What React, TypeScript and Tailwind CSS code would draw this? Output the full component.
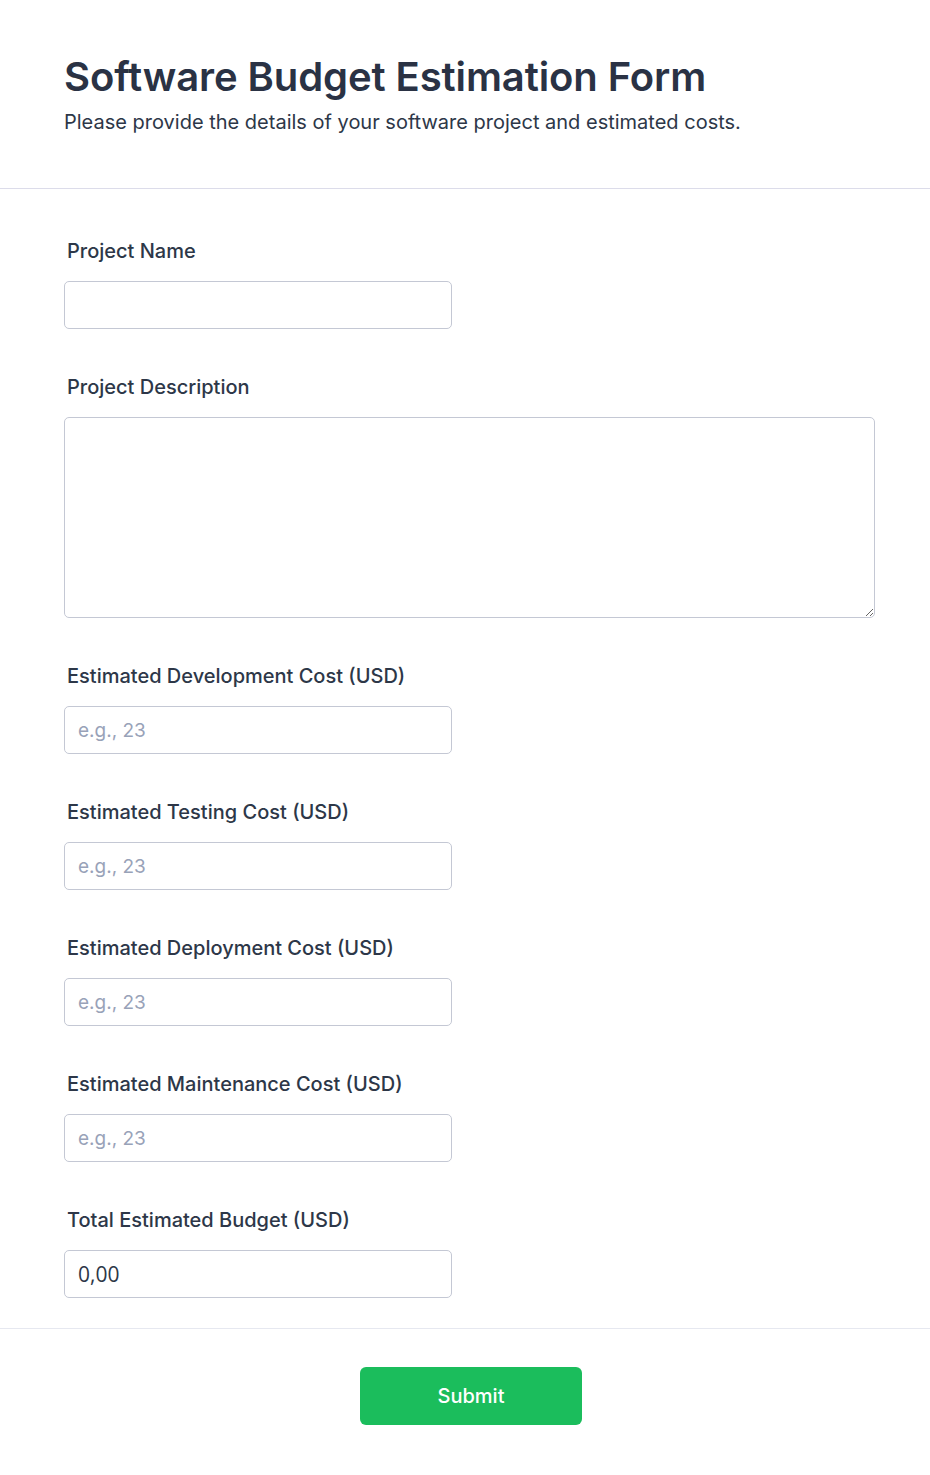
import { useState } from "react";

const costFields = [
  "Estimated Development Cost (USD)",
  "Estimated Testing Cost (USD)",
  "Estimated Deployment Cost (USD)",
  "Estimated Maintenance Cost (USD)",
];

const inputCls =
  "w-[388px] h-12 rounded-[5px] border border-[#c4c8d4] bg-white px-[13px] text-[19px] text-[#2d3748] placeholder:text-[#98a2b8] focus:outline-none";

const labelCls = "block pl-[3px] text-xl font-medium leading-7 text-[#2d3748] mb-4";

export default function App() {
  const [name, setName] = useState("");
  const [desc, setDesc] = useState("");
  const [costs, setCosts] = useState<string[]>(["", "", "", ""]);

  const total = costs.reduce((sum, c) => sum + (parseFloat(c) || 0), 0);

  return (
    <div className="min-h-screen bg-white font-['Inter',sans-serif] text-[#2d3748]">
      {/* header */}
      <header className="px-16 pt-[53px] pb-[52px] border-b border-[#dcdcea]">
        <h1 className="text-[40px] font-semibold leading-[48px] tracking-[-0.1px] text-[#2a3244]">
          Software Budget Estimation Form
        </h1>
        <p className="mt-[7px] text-xl leading-7 text-[#2d3748]">
          Please provide the details of your software project and estimated costs.
        </p>
      </header>

      <form className="pl-16 pr-[55px] pt-[48px] pb-[30px] flex flex-col gap-[44px]">
        <div>
          <label className={labelCls}>Project Name</label>
          <input
            type="text"
            value={name}
            onChange={(e) => setName(e.target.value)}
            className={inputCls}
          />
        </div>

        <div>
          <label className={labelCls}>Project Description</label>
          <textarea
            value={desc}
            onChange={(e) => setDesc(e.target.value)}
            className="block w-full h-[201px] rounded-[5px] border border-[#c4c8d4] bg-white px-[13px] py-2 text-lg focus:outline-none"
          />
        </div>

        {costFields.map((label, i) => (
          <div key={label}>
            <label className={labelCls}>{label}</label>
            <input
              type="text"
              placeholder="e.g., 23"
              value={costs[i]}
              onChange={(e) => {
                const next = [...costs];
                next[i] = e.target.value;
                setCosts(next);
              }}
              className={inputCls}
            />
          </div>
        ))}

        <div>
          <label className={labelCls}>Total Estimated Budget (USD)</label>
          <input
            type="text"
            readOnly
            value={total.toFixed(2).replace(".", ",")}
            className={inputCls + " font-['Open_Sans',sans-serif] text-[21px]"}
          />
        </div>
      </form>

      <div className="border-t border-[#e6e8f0] flex justify-center pt-[38px] pb-12">
        <button
          type="button"
          className="w-[222px] h-[58px] ml-[12px] rounded-md bg-[#1bbd5c] text-xl font-medium text-white"
        >
          Submit
        </button>
      </div>
    </div>
  );
}
